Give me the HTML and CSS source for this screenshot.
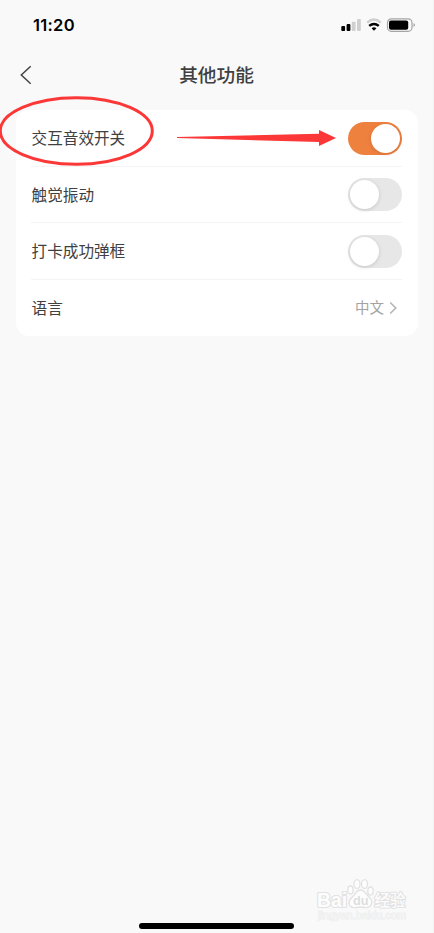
FILE: index.html
```html
<!DOCTYPE html>
<html lang="zh-CN">
<head>
<meta charset="utf-8">
<title>其他功能</title>
<link rel="stylesheet" href="styles.css">
</head>
<body>
<main class="screen">
  <header class="status">
    <span class="time">11:20</span>
    <svg class="indicators" width="76" height="16" viewBox="0 0 76 16">
      <rect x="1.3" y="9" width="3.8" height="5" rx="1"/>
      <rect x="6.6" y="7" width="3.8" height="7" rx="1"/>
      <g fill="#cfcfcf"><rect x="11.8" y="4.7" width="3.8" height="9.3" rx="1"/><rect x="17" y="2" width="3.8" height="12" rx="1"/></g>
      <path d="M27.2 5.6Q34 -.4 40.8 5.6" fill="none" stroke="#cfcfcf" stroke-width="2.4"/>
      <path d="M29.2 8.9Q34 5 38.8 8.9" fill="none" stroke="#000" stroke-width="2.5"/>
      <path d="M31.6 11.2Q34 9.3 36.4 11.2L34 13.7Z"/>
      <rect x="47.5" y="1.9" width="24.5" height="12.4" rx="3.8" fill="none" stroke="#a5a5a5" stroke-width="1.2"/>
      <rect x="49" y="3.5" width="19.2" height="9.2" rx="2"/>
      <path d="M73.5 6Q75.1 7 75.1 8T73.5 10.2Z" fill="#a5a5a5"/>
    </svg>
  </header>
  <nav class="nav">
    <svg class="back" width="12" height="20" viewBox="0 0 12 20"><path d="M10.7 1.2L1.3 10L10.7 18.8"/></svg>
    <h1>其他功能</h1>
  </nav>
  <section class="card">
    <div class="row"><span class="label">交互音效开关</span><i class="switch on"></i></div>
    <div class="row"><span class="label">触觉振动</span><i class="switch"></i></div>
    <div class="row"><span class="label">打卡成功弹框</span><i class="switch"></i></div>
    <div class="row"><span class="label">语言</span><span class="value">中文<svg width="8" height="14" viewBox="0 0 8 14"><path d="M1.2 1.5L6.8 7L1.2 12.5"/></svg></span></div>
  </section>
  <svg class="marks" width="434" height="110" viewBox="0 0 434 110">
    <ellipse cx="76.3" cy="41" rx="76" ry="33.3"/>
    <path d="M177 47L319 43.8V40L336 48L319 56V52L177 48Z"/>
  </svg>
  <div class="watermark">
    <svg class="outline" width="96" height="33" viewBox="0 0 96 33">
      <text x="2" y="29.5" font-size="19.5" textLength="30" lengthAdjust="spacingAndGlyphs">Bai</text>
      <ellipse cx="35.5" cy="13" rx="2.7" ry="4"/>
      <ellipse cx="42" cy="7" rx="3" ry="4.4"/>
      <ellipse cx="49.5" cy="7" rx="3" ry="4.4"/>
      <ellipse cx="55.5" cy="14" rx="2.7" ry="4"/>
      <path d="M45.5 13C49.5 13 51 17 54 20C59.5 25 56 31 50 30.5Q45.5 29.5 41 30.5C34 31.5 31.5 25 37.5 20C40.5 17 41.5 13 45.5 13Z"/>
      <text class="du" x="38" y="28" font-size="13" textLength="15.5" lengthAdjust="spacingAndGlyphs">du</text>
      <text class="cjk" x="59.5" y="28.7" font-size="15.5" textLength="31">经验</text>
    </svg>
    <svg class="url" width="96" height="14" viewBox="0 0 96 14">
      <text x="3" y="9.2" font-size="10" textLength="88" lengthAdjust="spacingAndGlyphs">jingyan.baidu.com</text>
    </svg>
  </div>
  <i class="home"></i>
</main>
</body>
</html>
```
FILE: styles.css
```css
* { box-sizing: border-box; }
body {
  margin: 0;
  background: #f9f9f9;
  color: #404040;
  font-family: Inter, "Noto Sans CJK SC", sans-serif;
}
.screen {
  position: relative;
  display: flex;
  flex-direction: column;
  width: 434px;
  height: 933px;
  border-right: 1px solid #f2f2f2;
  overflow: hidden;
}
.status {
  display: flex;
  justify-content: space-between;
  align-items: center;
  height: 50px;
  padding: 0 17px 0 33px;
}
.time {
  color: #000;
  font-size: 16.5px;
  font-weight: 600;
  letter-spacing: .3px;
  line-height: 20px;
}
.nav {
  display: grid;
  grid-template-columns: 32px 1fr 32px;
  align-items: center;
  height: 50px;
}
.back { margin: -1px 0 0 20px; }
.back path { fill: none; stroke: #444; stroke-width: 1.5; }
h1 {
  margin: 0;
  padding-top: 1px;
  text-align: center;
  font-size: 18.7px;
  font-weight: 500;
  line-height: 28px;
}
.card {
  width: 402px;
  height: 226px;
  margin: 10px 0 0 16px;
  padding: 0 16px 0 15px;
  border-radius: 13px;
  background: #fff;
  display: grid;
  grid-template-rows: repeat(4, 56.5px);
}
.row {
  display: flex;
  align-items: center;
  justify-content: space-between;
  font-size: 15.6px;
  line-height: 24px;
  border-bottom: 1px solid #f4f4f4;
}
.row:last-child { border-bottom: 0; }
.label { padding: 3px 0 0 .6px; }
.row:last-child .label { padding-top: 2px; }
.switch {
  display: flex;
  width: 54px;
  height: 33px;
  margin: 1px 0 0;
  padding: 2px;
  border-radius: 17px;
  background: #e7e7e7;
}
.switch::before {
  content: "";
  width: 29px;
  height: 29px;
  border-radius: 50%;
  background: #fff;
  box-shadow: 0 1px 4px rgba(0, 0, 0, .14);
}
.switch.on { justify-content: flex-end; background: #ef813f; }
.value {
  display: flex;
  align-items: center;
  gap: 5px;
  margin-right: 5px;
  color: #a3a3a3;
  font-size: 14.5px;
}
.value path { fill: none; stroke: #b5b5b5; stroke-width: 1.6; }
.marks { position: absolute; left: 0; top: 90px; }
.marks ellipse { fill: none; stroke: #fc3737; stroke-width: 3; }
.marks path { fill: #fc3737; }
.watermark {
  position: absolute;
  left: 315px;
  top: 877px;
  display: flex;
  flex-direction: column;
  font-family: "Liberation Sans", sans-serif;
  font-weight: 700;
}
.outline { fill: #fdfdfd; stroke: #e2e2e2; stroke-width: 1.3; }
.outline text { paint-order: stroke; stroke-width: 2.2; stroke-linejoin: round; }
.outline .du { fill: #dedede; stroke: none; }
.outline .cjk { font-family: "Noto Sans CJK SC", sans-serif; font-weight: 500; }
.url { fill: #f4f4f4; stroke: #ececec; stroke-width: .8; font-weight: 400; }
.url text { paint-order: stroke; }
.home {
  position: absolute;
  left: 139px;
  top: 923px;
  width: 155px;
  height: 6px;
  border-radius: 3px;
  background: #000;
}
```
